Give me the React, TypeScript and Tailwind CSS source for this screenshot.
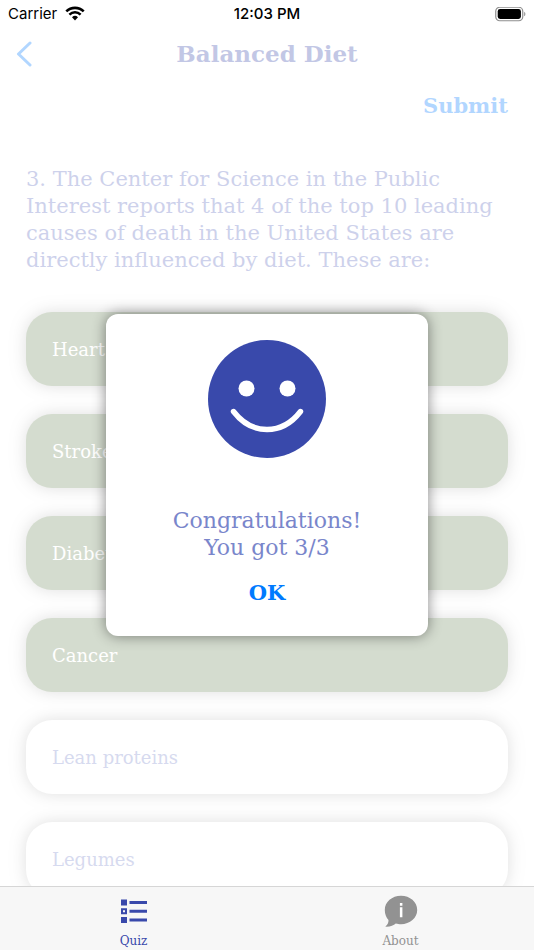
import { useState } from "react";
import type { ReactNode } from "react";

const options = [
    { label: "Heart disease", selected: true },
    { label: "Stroke", selected: true },
    { label: "Diabetes", selected: true },
    { label: "Cancer", selected: true },
    { label: "Lean proteins", selected: false },
    { label: "Legumes", selected: false },
];

const StatusBar = () => (
    <div className="grid h-7 shrink-0 grid-cols-3 items-center pl-2 pr-2 font-['Inter',sans-serif] text-[15px] text-black">
        <div className="flex items-center gap-2">
            <span>Carrier</span>
            <svg width="20" height="16" viewBox="0 0 20 16" fill="none" aria-hidden="true">
                <path d="M1.3 5.400a12.400 12.400 0 0 1 17.400 0" stroke="black" strokeWidth="2.600" />
                <path d="M4.400 8.600a8 8 0 0 1 11.200 0" stroke="black" strokeWidth="2.500" />
                <path d="M10 14.400 7 11.300a4.300 4.300 0 0 1 6 0Z" fill="black" />
            </svg>
        </div>
        <span className="text-center font-medium">12:03 PM</span>
        <svg className="justify-self-end" width="31" height="15" viewBox="0 0 31 15" aria-hidden="true">
            <rect x="0.75" y="0.25" width="27" height="13.500" rx="4" fill="none" stroke="#8e8e8e" strokeWidth="1.200" />
            <rect x="2.700" y="2.100" width="23.200" height="9.800" rx="2.400" fill="black" />
            <path d="M29.200 4.700c1.600.9 1.600 3.700 0 4.600Z" fill="#8e8e8e" />
        </svg>
    </div>
);

const OptionButton = ({ label, selected }: { label: string; selected: boolean }) => (
    <button
        type="button"
        aria-pressed={selected}
        className={`h-[74px] w-full shrink-0 rounded-[26px] px-[26px] text-left text-[18px] shadow-[0_0_16px_rgba(0,0,0,0.4)] ${
            selected ? "bg-[#758f62] text-white" : "bg-white text-[#7986cb]"
        }`}
    >
        {label}
    </button>
);

const Smiley = () => (
    <svg width="120" height="120" viewBox="0 0 120 120" fill="none" aria-hidden="true">
        <circle cx="60" cy="60" r="59" fill="#3949ab" />
        <circle cx="39.500" cy="49.500" r="8" fill="white" />
        <circle cx="80.500" cy="49.500" r="8" fill="white" />
        <path d="M26.500 72.500c18.500 24 48.500 24 67 0" stroke="white" strokeWidth="5.400" strokeLinecap="round" />
    </svg>
);

const ResultDialog = ({ onClose }: { onClose: () => void }) => (
    <div className="absolute inset-0 grid place-items-center">
        <div
            role="dialog"
            aria-label="Quiz result"
            className="flex h-[322px] w-[322px] flex-col items-center rounded-xl bg-white pt-[25px] shadow-[0_0_14px_rgba(0,0,0,0.45)]"
        >
            <Smiley />
            <p className="mt-12 text-center text-[22px] leading-[27px] text-[#7986cb]">
                Congratulations!
                <br />
                You got 3/3
            </p>
            <button type="button" onClick={onClose} className="mt-4 px-4 text-[21px] leading-8 font-bold text-[#007aff]">
                OK
            </button>
        </div>
    </div>
);

const TabLink = ({ label, color, children }: { label: string; color: string; children: ReactNode }) => (
    <a href={`#${label.toLowerCase()}`} className={`flex flex-col items-center gap-1 pt-2 text-[12px] leading-4 ${color}`}>
        {children}
        {label}
    </a>
);

const TabBar = () => (
    <nav className="grid h-16 shrink-0 grid-cols-2 border-t border-[#d6d6d6] bg-[#f7f7f7]">
        <TabLink label="Quiz" color="text-[#3949ab]">
            <svg width="34" height="34" viewBox="0 0 34 34" fill="currentColor" aria-hidden="true">
                <path d="M4 4.500h6v6H4ZM4 22h6v6H4Z" />
                <path d="M4 13.200h6v6H4Zm2 2v2h2v-2Z" fillRule="evenodd" />
                <path d="M12.500 6h17.500v3H12.500ZM12.500 14.700h17.500v3H12.500ZM12.500 23.500h17.500v3H12.500Z" />
            </svg>
        </TabLink>
        <TabLink label="About" color="text-[#929292]">
            <svg width="34" height="34" viewBox="0 0 34 34" aria-hidden="true">
                <path
                    d="M17 .8c9 0 16.200 6.200 16.200 14.200S26 29.200 17 29.200c-2 0-3.500-.3-5.200-.8-2.300 2-5.600 3.500-10.600 3.200 2.300-1.700 3.400-3.700 3.300-6.600C2.200 22.400.8 19 .8 15 .8 7 8 .8 17 .8Z"
                    fill="#929292"
                />
                <path d="M15.900 8h2.500v2.700h-2.500ZM15.900 12.200h2.500v10h-2.500Z" fill="white" />
            </svg>
        </TabLink>
    </nav>
);

export default function App() {
    const [showResult, setShowResult] = useState(true);

    return (
        <div className="relative flex h-screen flex-col overflow-hidden bg-white font-['DejaVu_Serif',serif]">
            <StatusBar />
            <main className={`flex min-h-0 flex-1 flex-col overflow-hidden ${showResult ? "opacity-30" : ""}`}>
                <header className="grid h-[52px] shrink-0 grid-cols-[40px_1fr_40px] items-center px-2">
                    <button type="button" aria-label="Back" className="justify-self-start pl-2 text-[#007aff]">
                        <svg width="17" height="26" viewBox="0 0 17 26" fill="none" aria-hidden="true">
                            <path
                                d="M14 2 2.500 13 14 24"
                                stroke="currentColor"
                                strokeWidth="3"
                                strokeLinecap="round"
                                strokeLinejoin="round"
                            />
                        </svg>
                    </button>
                    <h1 className="text-center text-[23px] font-bold text-[#3949ab]">Balanced Diet</h1>
                </header>
                <div className="flex flex-col px-[26px]">
                    <button type="button" className="mt-2.5 self-end text-[21px] leading-8 font-bold text-[#007aff]">
                        Submit
                    </button>
                    <h2 className="mt-11 text-[21px] leading-[27px] text-[#5c6bc0]">
                        3. The Center for Science in the Public Interest reports that 4 of the top 10 leading causes of
                        death in the United States are directly influenced by diet. These are:
                    </h2>
                    <div className="mt-[38px] flex flex-col gap-7">
                        {options.map((option) => (
                            <OptionButton key={option.label} {...option} />
                        ))}
                    </div>
                </div>
            </main>
            <TabBar />
            {showResult && <ResultDialog onClose={() => setShowResult(false)} />}
        </div>
    );
}
